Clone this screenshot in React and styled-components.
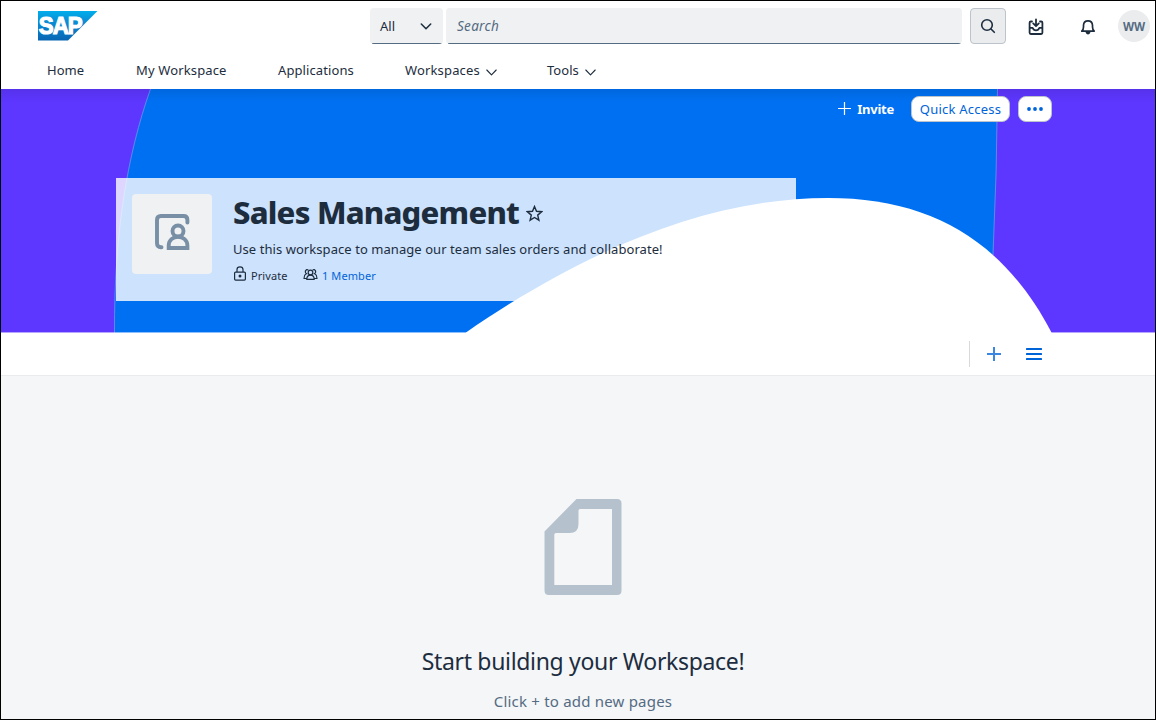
import React from "react";
import styled, { createGlobalStyle } from "styled-components";

const Global = createGlobalStyle`
  * { box-sizing: border-box; }
  html, body { margin: 0; padding: 0; background: #fff; }
  body { overflow: hidden; font-family: "Noto Sans", "Open Sans", sans-serif; color: #1d2d3e; }
  svg { display: block; flex: none; }
`;

const Frame = styled.div`
  width: 1156px;
  height: 720px;
  border: 1px solid #000;
  background: #f4f6f8;
  display: flex;
  flex-direction: column;
  overflow: hidden;
`;

const Text = styled.span`
  font-size: ${(p) => p.$size || 13}px;
  font-weight: ${(p) => p.$weight || 400};
  font-style: ${(p) => (p.$italic ? "italic" : "normal")};
  letter-spacing: ${(p) => p.$track || 0}px;
  color: ${(p) => p.$color || "#1d2d3e"};
  line-height: ${(p) => p.$line || 20}px;
  white-space: nowrap;
`;

const Header = styled.header`
  height: 88px;
  background: #fff;
  flex: none;
`;

const TopBar = styled.div`
  height: 51px;
  display: flex;
  align-items: flex-start;
  padding: 7px 5px 0 37px;
`;

const LogoBox = styled.div`
  width: 332px;
  padding-top: 3px;
`;

const Field = styled.div`
  width: ${(p) => p.$width}px;
  height: 36px;
  display: flex;
  align-items: center;
  justify-content: space-between;
  padding: 0 ${(p) => p.$right || 0}px 0 ${(p) => p.$left}px;
  background: linear-gradient(#556b82, #556b82) center bottom / calc(100% - 3px) 1px no-repeat, #eff1f2;
  border-radius: 4px;
  margin-right: ${(p) => p.$gap}px;
`;

const SearchButton = styled.button`
  width: 36px;
  height: 36px;
  padding: 0;
  margin-right: 4px;
  display: grid;
  place-items: center;
  background: #eaecee;
  border: 1px solid #bcc3ca;
  border-radius: 4px;
`;

const IconSlot = styled.div`
  width: 52px;
  height: 37px;
  display: grid;
  place-items: center;
`;

const Avatar = styled.div`
  width: 32px;
  height: 32px;
  margin: 2px 0 0 4px;
  padding-top: 1px;
  border-radius: 50%;
  background: #eaecee;
  display: grid;
  place-items: center;
`;

const Nav = styled.nav`
  display: flex;
  padding: 8px 0 0 46px;
  height: 37px;
`;

const NavItem = styled.a`
  display: flex;
  gap: 6px;
  width: ${(p) => p.$width}px;
  svg { margin-top: 9px; }
`;

const Banner = styled.section`
  position: relative;
  height: 244px;
  flex: none;
  background: #fff;
`;

const Artwork = styled.svg`
  position: absolute;
  inset: 0;
`;

const BannerContent = styled.div`
  position: relative;
  height: 100%;
  padding: 7px 103px 0 115px;
`;

const Actions = styled.div`
  display: flex;
  justify-content: flex-end;
  height: 82px;
`;

const Invite = styled.div`
  display: flex;
  gap: 6px;
  height: 26px;
  align-items: center;
  margin-right: 17px;
  svg { margin-bottom: 2px; }
`;

const PillButton = styled.button`
  width: ${(p) => p.$width}px;
  height: 26px;
  padding: 0;
  margin-right: ${(p) => p.$gap || 0}px;
  display: grid;
  place-items: center;
  background: #fff;
  border: 1px solid #bcc3ca;
  border-radius: 8px;
  font-family: inherit;
`;

const Card = styled.div`
  width: 680px;
  height: 123px;
  padding: 16px;
  display: flex;
  background: rgba(255, 255, 255, 0.8);
`;

const Tile = styled.div`
  width: 80px;
  height: 80px;
  border-radius: 4px;
  background: #eff1f2;
  padding: 20px 0 0 23px;
  flex: none;
`;

const Details = styled.div`
  padding-left: 21px;
  display: flex;
  flex-direction: column;
`;

const TitleRow = styled.div`
  display: flex;
  gap: 7px;
  height: 38px;
  flex: none;
  svg { margin-top: 11px; }
`;

const Meta = styled.div`
  display: flex;
  height: 16px;
  margin-top: -1px;
`;

const MetaItem = styled.div`
  display: flex;
  align-items: flex-start;
  width: ${(p) => p.$width}px;
  gap: ${(p) => p.$gap}px;
  svg { margin-top: ${(p) => p.$drop || 0}px; }
`;

const Toolbar = styled.div`
  height: 43px;
  flex: none;
  background: #fff;
  border-bottom: 1px solid #e9ebed;
  display: flex;
  justify-content: flex-end;
  align-items: center;
  padding-right: 113px;
`;

const Divider = styled.div`
  width: 1px;
  height: 26px;
  background: #d9d9d9;
  margin-right: 17px;
`;

const MenuSlot = styled.div`
  margin-left: 25px;
`;

const Empty = styled.main`
  flex: 1;
  display: flex;
  flex-direction: column;
  align-items: center;
  padding: 123px 0 0 10px;
  gap: 50px;
`;

const Messages = styled.div`
  display: flex;
  flex-direction: column;
  align-items: center;
  gap: 14px;
`;

const Logo = () => (
  <svg width="60" height="30" viewBox="0 0 60 30">
    <defs>
      <linearGradient id="sap" x1="0" y1="0" x2="0" y2="1">
        <stop offset="0" stopColor="#00adeb" />
        <stop offset="0.4" stopColor="#0b8bd3" />
        <stop offset="1" stopColor="#0865b3" />
      </linearGradient>
    </defs>
    <path d="M0 0H59.500L30 29.500H0Z" fill="url(#sap)" />
    <text x="0.800" y="23.200" textLength="43" lengthAdjust="spacingAndGlyphs" letterSpacing="-1" fill="#fff" stroke="#fff" strokeWidth="1.2" fontFamily="Liberation Sans" fontWeight="700" fontSize="23.500">SAP</text>
  </svg>
);

const Chevron = ({ w = 11, h = 7, color = "#1d2d3e", stroke = 1.1 }) => (
  <svg width={w} height={h} viewBox="0 0 11 7" fill="none" stroke={color} strokeWidth={stroke} strokeLinecap="round" strokeLinejoin="round">
    <path d="M0.800 1L5.500 5.800L10.200 1" />
  </svg>
);

const SearchIcon = () => (
  <svg width="16" height="16" viewBox="0 0 16 16" fill="none" stroke="#1d2d3e" strokeWidth="1.6" strokeLinecap="round">
    <circle cx="7" cy="7" r="5.3" />
    <path d="M11 11L14.300 14.300" />
  </svg>
);

const InboxIcon = () => (
  <svg width="16" height="18" viewBox="0 0 16 18" fill="none" stroke="#1d2d3e" strokeWidth="1.8" strokeLinecap="round" strokeLinejoin="round">
    <path d="M4 3.500H2.800Q1.600 3.500 1.600 4.700V14.800Q1.600 16 2.800 16H13.200Q14.400 16 14.400 14.800V4.700Q14.400 3.500 13.200 3.500H12" />
    <path d="M8 1.500V8M5.200 5.400L8 8.200L10.800 5.400M1.800 9.800H4.600Q5.600 12.400 8 12.400T11.400 9.800H14.200" />
  </svg>
);

const BellIcon = () => (
  <svg width="16" height="16" viewBox="0 0 16 16" fill="none" stroke="#1d2d3e" strokeWidth="1.7" strokeLinejoin="round">
    <path d="M1.800 12.200Q3.500 10.400 3.500 8V6.200Q3.700 1.800 8 1.800T12.500 6.200V8Q12.500 10.400 14.200 12.200Z" />
    <path d="M5.300 12.800H10.700Q9.800 15.500 8 15.500T5.300 12.800Z" fill="#1d2d3e" stroke="none" />
  </svg>
);

const PlusIcon = ({ color, size, stroke }) => (
  <svg width={size} height={size} viewBox="0 0 14 14" stroke={color} strokeWidth={stroke}>
    <path d="M7 0V14M0 7H14" />
  </svg>
);

const WorkspaceIcon = () => (
  <svg width="35" height="37" viewBox="0 0 35 37" fill="none" stroke="#788fa6" strokeWidth="3.9" strokeLinecap="round" strokeLinejoin="round">
    <path d="M6.500 33.200H5.900Q2 33.200 2 29.300V5.900Q2 2 5.900 2H28.500Q32.400 2 32.400 5.900V8.600" />
    <circle cx="23" cy="17" r="5.5" />
    <path d="M13.700 34H32.400V31.500C32.400 26.200 28 22.700 23 22.700S13.700 26.200 13.700 31.500Z" strokeLinejoin="miter" />
  </svg>
);

const StarIcon = () => (
  <svg width="17" height="17" viewBox="0 0 17 17" fill="none" stroke="#1d2d3e" strokeWidth="1.4" strokeLinejoin="miter">
    <path d="M8.500 1.500L10.500 6.300L15.600 6.700L11.700 10.100L12.900 15.200L8.500 12.500L4.100 15.200L5.300 10.100L1.400 6.700L6.500 6.300Z" />
  </svg>
);

const LockIcon = () => (
  <svg width="14" height="15" viewBox="0 0 14 15" fill="none" stroke="#1d2d3e" strokeWidth="1.2">
    <rect x="1.600" y="6.100" width="10.800" height="8" rx="1" />
    <path d="M4 6V3.600Q4 0.800 7 0.800T10 3.600V6" />
    <circle cx="7" cy="10.100" r="1.5" fill="#1d2d3e" stroke="none" />
  </svg>
);

const GroupIcon = () => (
  <svg width="15" height="13" viewBox="0 0 16 14" fill="none" stroke="#1d2d3e" strokeWidth="1.3" strokeLinejoin="round">
    <circle cx="8" cy="4.800" r="2.500" />
    <path d="M4 12.300Q4 7.700 8 7.700T12 12.300ZM5.600 2.300Q4.800 1.400 3.700 1.800Q1.800 2.800 2.800 5.400Q3.200 6.200 4.600 6.300M10.400 2.300Q11.200 1.400 12.300 1.800Q14.200 2.800 13.200 5.400Q12.800 6.200 11.400 6.300M3.200 6.200Q1 7.500 1 11.300H3.800M12.800 6.200Q15 7.500 15 11.300H12.200" />
  </svg>
);

const PageIcon = () => (
  <svg width="78" height="96" viewBox="0 0 78 96">
    <path fill="#b5c1cd" fillRule="evenodd" d="M32.500 0H73Q77.500 0 77.500 4.500V91.500Q77.500 96 73 96H5Q0.500 96 0.500 91.500V32.500ZM36 10Q34.500 10 34.500 11.500V25Q34.500 34 25.500 34H12Q10.300 34 10.300 35.500V86H68V10Z" />
  </svg>
);

export default function App() {
  return (
    <>
      <Global />
      <Frame>
        <Header>
          <TopBar>
            <LogoBox><Logo /></LogoBox>
            <Field $width={73} $left={10} $right={11} $gap={3}>
              <Text>All</Text>
              <Chevron w={12} h={7} stroke={1.5} />
            </Field>
            <Field $width={516} $left={11} $gap={8}>
              <Text $italic $size={13.5} $track={0.3} $color="#556b82">Search</Text>
            </Field>
            <SearchButton><SearchIcon /></SearchButton>
            <IconSlot><InboxIcon /></IconSlot>
            <IconSlot><BellIcon /></IconSlot>
            <Avatar><Text $size={11.5} $weight={700} $color="#556b82">WW</Text></Avatar>
          </TopBar>
          <Nav>
            <NavItem $width={89}><Text>Home</Text></NavItem>
            <NavItem $width={142}><Text $track={0.14}>My Workspace</Text></NavItem>
            <NavItem $width={127}><Text $track={0.1}>Applications</Text></NavItem>
            <NavItem $width={142}><Text $track={0.15}>Workspaces</Text><Chevron /></NavItem>
            <NavItem $width={60}><Text $track={0.05}>Tools</Text><Chevron /></NavItem>
          </Nav>
        </Header>
        <Banner>
          <Artwork width="1154" height="244" viewBox="1 89 1154 244">
            <defs>
              <linearGradient id="shade" x1="0" y1="0" x2="0" y2="1">
                <stop offset="0" stopColor="#000" stopOpacity="0.08" />
                <stop offset="1" stopColor="#000" stopOpacity="0" />
              </linearGradient>
            </defs>
            <rect x="1" y="89" width="1154" height="244" fill="#5d36ff" />
            <path d="M150.500 89C127 155 114 235 114.500 333H993V255Q997 172 997.500 89Z" fill="#0070f2" />
            <path d="M150.500 89C127 155 114 235 114.500 333M993 255Q997 172 997.500 89" fill="none" stroke="#6d94f8" strokeWidth="0.8" />
            <rect x="1" y="89" width="1154" height="13" fill="url(#shade)" />
            <rect x="1" y="332" width="1154" height="1" fill="#fff" fillOpacity="0.55" />
            <path d="M466 332.500C594 244 716 198 828 198C930 198 1003 240 1051.500 332.500V333H466Z" fill="#fff" />
          </Artwork>
          <BannerContent>
            <Actions>
              <Invite>
                <PlusIcon color="#fff" size={13} stroke={1.3} />
                <Text $weight={700} $color="#fff" $track={-0.25}>Invite</Text>
              </Invite>
              <PillButton $width={99} $gap={8}><Text $track={0.23} $color="#0064d9">Quick Access</Text></PillButton>
              <PillButton $width={34}>
                <svg width="18" height="4" viewBox="0 0 18 4" fill="#0064d9">
                  <circle cx="3" cy="2" r="1.9" /><circle cx="9" cy="2" r="1.9" /><circle cx="15" cy="2" r="1.9" />
                </svg>
              </PillButton>
            </Actions>
            <Card>
              <Tile><WorkspaceIcon /></Tile>
              <Details>
                <TitleRow>
                  <Text $size={31} $weight={800} $line={37} $track={-0.78}>Sales Management</Text>
                  <StarIcon />
                </TitleRow>
                <Text $line={35} $track={0.06}>Use this workspace to manage our team sales orders and collaborate!</Text>
                <Meta>
                  <MetaItem $width={70} $gap={4}><LockIcon /><Text $size={11} $line={19} $track={0.08}>Private</Text></MetaItem>
                  <MetaItem $width={90} $gap={4} $drop={2}><GroupIcon /><Text $size={11} $line={19} $track={0.1} $color="#0064d9">1 Member</Text></MetaItem>
                </Meta>
              </Details>
            </Card>
          </BannerContent>
        </Banner>
        <Toolbar>
          <Divider />
          <PlusIcon color="#3a86e0" size={14} stroke={2} />
          <MenuSlot>
            <svg width="16" height="12" viewBox="0 0 16 12" fill="#0064d9">
              <rect width="16" height="2" rx="0.500" /><rect y="5" width="16" height="2" rx="0.500" /><rect y="10" width="16" height="2" rx="0.500" />
            </svg>
          </MenuSlot>
        </Toolbar>
        <Empty>
          <PageIcon />
          <Messages>
            <Text $size={23} $line={32} $track={-0.33}>Start building your Workspace!</Text>
            <Text $size={15} $line={20} $track={0.2} $color="#556b82">Click + to add new pages</Text>
          </Messages>
        </Empty>
      </Frame>
    </>
  );
}
